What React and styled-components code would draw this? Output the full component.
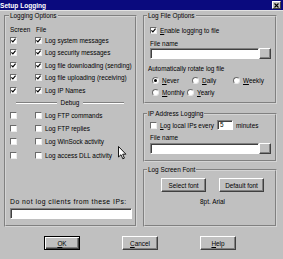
import styled, { createGlobalStyle } from 'styled-components';

const GlobalStyle = createGlobalStyle`
  html, body {
    margin: 0;
    padding: 0;
    background: #c0c0c0;
  }
  body {
    font-family: "Liberation Sans", Arial, sans-serif;
    font-size: 6.4px;
    color: #000;
  }
`;

const Dialog = styled.div`
  position: relative;
  width: 283px;
  height: 259px;
  background: #c0c0c0;
  overflow: hidden;
  display: flex;
  flex-direction: column;
`;

const TitleBar = styled.div`
  height: 10px;
  flex: none;
  background: #0a0a7e;
  border-bottom: 1px solid #e2e2e2;
  display: flex;
  align-items: center;
  justify-content: space-between;
  padding-right: 2px;
`;

const Title = styled.span`
  color: #fff;
  font-weight: bold;
  font-size: 6.6px;
  line-height: 9px;
`;

const CloseBox = styled.span`
  box-sizing: border-box;
  width: 9px;
  height: 8px;
  background: #c0c0c0;
  border: 1px solid;
  border-color: #fff #404040 #404040 #fff;
  display: flex;
  align-items: center;
  justify-content: center;
`;

const Body = styled.div`
  display: grid;
  grid-template-columns: 133px 134px;
  column-gap: 6px;
  padding: 1px 0 0 4px;
`;

const Column = styled.div`
  display: flex;
  flex-direction: column;
`;

const Group = styled.fieldset`
  box-sizing: border-box;
  margin: 0;
  margin-top: ${(p) => p.$top || 0}px;
  padding: 0 0 0 ${(p) => p.$pad}px;
  height: ${(p) => p.$h}px;
  min-width: 0;
  border: 2px groove #d4d4d4;
  display: flex;
  flex-direction: column;
`;

const Legend = styled.legend`
  padding: 0 1px;
  margin-left: ${(p) => p.$shift}px;
  line-height: 8px;
  background: #c0c0c0;
`;

const Text = styled.div`
  height: 8px;
  line-height: 8px;
  white-space: nowrap;
  margin-top: ${(p) => p.$top || 0}px;
  margin-left: ${(p) => p.$left || 0}px;
  text-align: ${(p) => p.$align || 'left'};
`;

const IpLabel = styled(Text)`
  font-size: 6.8px;
  letter-spacing: 0.5px;
  margin-top: auto;
`;

const HeaderRow = styled.div`
  display: grid;
  grid-template-columns: 26px auto;
  height: 8px;
  line-height: 8px;
  margin-top: 6px;
`;

const CheckRow = styled.div`
  display: grid;
  grid-template-columns: 25px 10px auto;
  align-items: center;
  height: ${(p) => p.$h}px;
  white-space: nowrap;
`;

const Line = styled.div`
  display: flex;
  align-items: center;
  gap: 3px;
  height: ${(p) => p.$h}px;
  margin-top: ${(p) => p.$top || 0}px;
  white-space: nowrap;
`;

const Separator = styled.div`
  display: flex;
  align-items: center;
  gap: 4px;
  height: 12px;
  margin: 0 11px 0 6px;
`;

const Rule = styled.div`
  flex: 1;
  height: 0;
  border-top: 1px solid #808080;
  border-bottom: 1px solid #fff;
`;

const Box = styled.span`
  box-sizing: border-box;
  width: 7px;
  height: 7px;
  flex: none;
  background: #fff;
  border: 1px solid;
  border-color: #6a6a6a #ececec #ececec #6a6a6a;
  display: flex;
  align-items: center;
  justify-content: center;
`;

const Radio = styled.span`
  box-sizing: border-box;
  width: 7px;
  height: 7px;
  flex: none;
  border-radius: 50%;
  background: #fff;
  border: 1px solid;
  border-color: #6a6a6a #e8e8e8 #e8e8e8 #6a6a6a;
  display: flex;
  align-items: center;
  justify-content: center;
  &::after {
    content: '';
    width: 3px;
    height: 3px;
    border-radius: 50%;
    background: ${(p) => (p.$on ? '#000' : 'transparent')};
  }
`;

const RadioRow = styled.div`
  display: grid;
  grid-template-columns: ${(p) => p.$cols};
  height: 10px;
  margin-top: 2px;
  padding-left: 2px;
  align-items: center;
  white-space: nowrap;
`;

const Option = styled.span`
  display: flex;
  align-items: center;
  gap: 3px;
`;

const Field = styled.div`
  box-sizing: border-box;
  height: ${(p) => p.$h || 11}px;
  width: ${(p) => (p.$w ? `${p.$w}px` : 'auto')};
  flex: ${(p) => (p.$w ? 'none' : '1')};
  background: #fff;
  border: 1px solid;
  border-color: #808080 #fff #fff #808080;
  box-shadow: inset 1px 1px #404040;
  padding-left: 2px;
  line-height: 8px;
`;

const FieldRow = styled.div`
  display: flex;
  margin-top: ${(p) => p.$top || 0}px;
  margin-right: ${(p) => p.$right || 0}px;
  margin-bottom: ${(p) => p.$bottom || 0}px;
`;

const Browse = styled.span`
  box-sizing: border-box;
  width: 12px;
  height: 11px;
  flex: none;
  background: #c0c0c0;
  border: 1px solid;
  border-color: #fff #404040 #404040 #fff;
  box-shadow: inset -1px -1px #808080;
`;

const Button = styled.button`
  box-sizing: border-box;
  width: ${(p) => p.$w}px;
  height: 14px;
  padding: 0;
  font: inherit;
  color: #000;
  background: #c0c0c0;
  border: 1px solid;
  border-color: ${(p) => (p.$default ? '#000' : '#fff #404040 #404040 #fff')};
  box-shadow: ${(p) =>
    p.$default
      ? 'inset 1px 1px #fff, inset -1px -1px #404040, inset -2px -2px #808080'
      : 'inset -1px -1px #808080'};
`;

const ButtonRow = styled.div`
  display: flex;
  justify-content: ${(p) => p.$justify || 'flex-start'};
  gap: ${(p) => p.$gap}px;
  margin-top: ${(p) => p.$top}px;
  padding-left: ${(p) => p.$left || 0}px;
`;

const Cursor = styled.svg`
  position: absolute;
  left: 118px;
  top: 146px;
`;

function Check({ on }) {
  return (
    <Box>
      {on && (
        <svg width="5" height="5" viewBox="0 0 5 5">
          <path d="M0.4 2.3 L1.9 3.9 L4.6 0.6" fill="none" stroke="#000" strokeWidth="1.2" />
        </svg>
      )}
    </Box>
  );
}

const logOptions = [
  'Log system messages',
  'Log security messages',
  'Log file downloading (sending)',
  'Log file uploading (receiving)',
  'Log IP Names',
];

const debugOptions = [
  'Log FTP commands',
  'Log FTP replies',
  'Log WinSock activity',
  'Log access DLL activity',
];

export default function App() {
  return (
    <>
      <GlobalStyle />
      <Dialog>
        <TitleBar>
          <Title>Setup Logging</Title>
          <CloseBox>
            <svg width="5" height="5" viewBox="0 0 5 5">
              <path d="M0.5 0.5 L4.5 4.5 M4.5 0.5 L0.5 4.5" stroke="#000" strokeWidth="1.1" />
            </svg>
          </CloseBox>
        </TitleBar>

        <Body>
          <Group $h={215} $pad={4}>
            <Legend $shift={-1}>Logging Options</Legend>
            <HeaderRow>
              <span>Screen</span>
              <span>File</span>
            </HeaderRow>
            {logOptions.map((label) => (
              <CheckRow key={label} $h={12.5}>
                <Check on />
                <Check on />
                <span>{label}</span>
              </CheckRow>
            ))}
            <Separator>
              <Rule />
              <span>Debug</span>
              <Rule />
            </Separator>
            {debugOptions.map((label) => (
              <CheckRow key={label} $h={13.3}>
                <Check />
                <Check />
                <span>{label}</span>
              </CheckRow>
            ))}
            <IpLabel>Do not log clients from these IPs:</IpLabel>
            <FieldRow $top={2} $right={3} $bottom={6}>
              <Field />
            </FieldRow>
          </Group>

          <Column>
            <Group $h={92} $pad={5}>
              <Legend $shift={-3}>Log File Options</Legend>
              <Line $h={11} $top={5}>
                <Check on />
                <span>
                  <u>E</u>nable logging to file
                </span>
              </Line>
              <Text $top={4}>File name</Text>
              <FieldRow $right={4}>
                <Field />
                <Browse />
              </FieldRow>
              <Text $top={6} $left={-2}>
                Automatically rotate log file
              </Text>
              <RadioRow $cols="40px 41px auto">
                <Option>
                  <Radio $on />
                  <span>
                    <u>N</u>ever
                  </span>
                </Option>
                <Option>
                  <Radio />
                  <span>
                    <u>D</u>aily
                  </span>
                </Option>
                <Option>
                  <Radio />
                  <span>
                    <u>W</u>eekly
                  </span>
                </Option>
              </RadioRow>
              <RadioRow $cols="35px auto">
                <Option>
                  <Radio />
                  <span>
                    <u>M</u>onthly
                  </span>
                </Option>
                <Option>
                  <Radio />
                  <span>
                    <u>Y</u>early
                  </span>
                </Option>
              </RadioRow>
            </Group>

            <Group $h={52} $pad={5} $top={6}>
              <Legend $shift={-3}>IP Address Logging</Legend>
              <Line $h={10} $top={2}>
                <Check />
                <span style={{ width: 54 }}>
                  <u>L</u>og local IPs every
                </span>
                <Field $w={16} $h={10}>
                  5
                </Field>
                <span>minutes</span>
              </Line>
              <Text $top={4}>File name</Text>
              <FieldRow $top={1} $right={4}>
                <Field />
                <Browse />
              </FieldRow>
            </Group>

            <Group $h={61} $pad={5} $top={4}>
              <Legend $shift={-3}>Log Screen Font</Legend>
              <ButtonRow $justify="center" $gap={13} $top={4}>
                <Button $w={45}>Select font</Button>
                <Button $w={45}>Default font</Button>
              </ButtonRow>
              <Text $top={6} $align="center">
                8pt. Arial
              </Text>
            </Group>
          </Column>
        </Body>

        <ButtonRow $gap={42} $top={9} $left={44}>
          <Button $w={36} $default>
            <u>O</u>K
          </Button>
          <Button $w={36}>
            <u>C</u>ancel
          </Button>
          <Button $w={36}>
            <u>H</u>elp
          </Button>
        </ButtonRow>

        <Cursor width="9" height="14" viewBox="0 0 9 14">
          <path
            d="M0.5 0.5 L0.5 11 L3 8.7 L4.8 12.8 L6.4 12.1 L4.7 8.2 L7.9 8.2 Z"
            fill="#fff"
            stroke="#000"
            strokeWidth="0.9"
          />
        </Cursor>
      </Dialog>
    </>
  );
}
